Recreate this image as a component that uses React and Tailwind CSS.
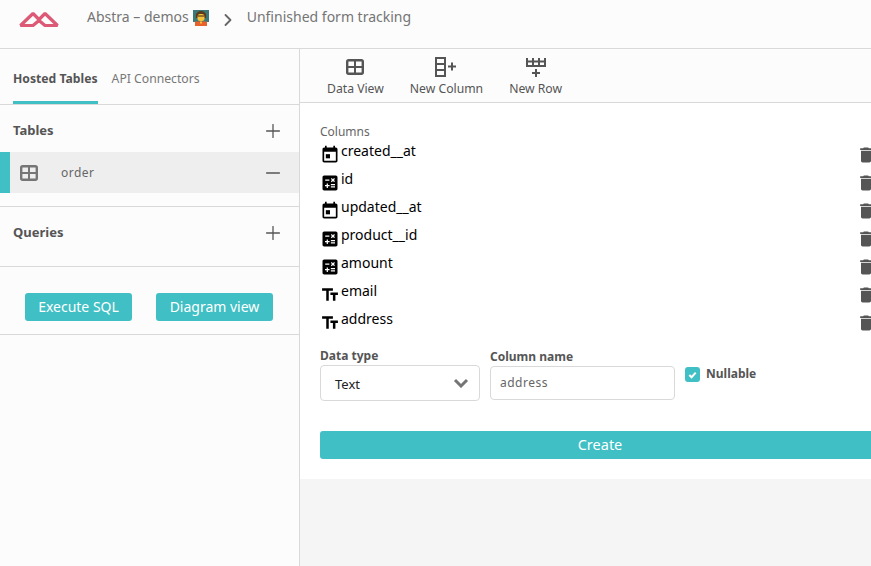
import React from "react";
import { ChevronRight, Plus, Minus } from "lucide-react";

function TableIcon({ className }) {
  return (
    <svg viewBox="0 0 18 16" className={className} fill="none" stroke="currentColor" strokeWidth="2.4">
      <rect x="1.200" y="1.200" width="15.600" height="13.600" rx="1.500" />
      <path d="M1 8h16M9 1v14" strokeWidth="2" />
    </svg>
  );
}

function NewColumnIcon() {
  return (
    <svg viewBox="0 0 22 20" className="h-5 w-[22px] text-[#555555]" fill="none" stroke="currentColor" strokeWidth="2">
      <rect x="1" y="1" width="9" height="18" />
      <path d="M1 7h9M1 13h9" />
      <path d="M13 9.500h8M17 5.500v8" />
    </svg>
  );
}

function NewRowIcon() {
  return (
    <svg viewBox="0 0 22 20" className="h-5 w-[22px] text-[#555555]" fill="none" stroke="currentColor" strokeWidth="2">
      <path d="M2 1v8h18V1M2 4.500h18M8 1v8M14 1v8" />
      <path d="M11 12v8M7 16h8" />
    </svg>
  );
}

function CalendarIcon() {
  return (
    <svg viewBox="0 0 24 24" className="h-5 w-5 shrink-0 text-black" fill="currentColor">
      <path d="M16 1v2H8V1H6v2H5C3.890 3 3 3.900 3 5v14c0 1.100.890 2 2 2h14c1.100 0 2-.900 2-2V5c0-1.100-.900-2-2-2h-1V1h-2zm3 18H5V8h14v11z" />
      <rect x="7" y="11" width="5" height="5" />
    </svg>
  );
}

function CalcIcon() {
  return (
    <svg viewBox="0 0 24 24" className="h-5 w-5 shrink-0 text-black" fill="currentColor">
      <path d="M19 3H5c-1.100 0-2 .900-2 2v14c0 1.100.900 2 2 2h14c1.100 0 2-.900 2-2V5c0-1.100-.900-2-2-2zm-5.970 4.060L14.090 6l1.410 1.410L16.910 6l1.060 1.060-1.410 1.410 1.410 1.410-1.060 1.060-1.410-1.400-1.410 1.410-1.060-1.060 1.410-1.410-1.410-1.420zm-6.780.660h5v1.500h-5v-1.500zM11.500 16h-2v2H8v-2H6v-1.500h2v-2h1.500v2h2V16zm6.500 1.250h-5v-1.500h5v1.500zm0-2.500h-5v-1.500h5v1.500z" />
    </svg>
  );
}

function TextIcon() {
  return (
    <svg viewBox="0 0 24 24" className="h-5 w-5 shrink-0 text-black" fill="currentColor">
      <path d="M2.500 4v3h5v12h3V7h5V4h-13zm19 5h-9v3h3v7h3v-7h3V9z" />
    </svg>
  );
}

function TrashIcon() {
  return (
    <svg viewBox="0 0 24 24" className="h-5 w-5 shrink-0 text-[#555555]" fill="currentColor">
      <path d="M6 19c0 1.100.900 2 2 2h8c1.100 0 2-.900 2-2V7H6v12zM19 4h-3.500l-1-1h-5l-1 1H5v2h14V4z" />
    </svg>
  );
}

function Logo() {
  return (
    <svg viewBox="0 0 42 16" className="h-4 w-[42px]" fill="none" stroke="#dc5a76" strokeWidth="3.200" strokeLinejoin="bevel">
      <path d="M2.500 14.500 L15 2.500 L21 8.500 L27 2.500 L39.500 14.500 L27 14.500 L21 9.500 L15 14.500 Z" />
    </svg>
  );
}

function TeacherEmoji() {
  return (
    <svg viewBox="0 0 16 16" className="h-4 w-4">
      <rect x="0" y="0" width="16" height="12" fill="#3b7a78" />
      <path d="M3 8c-1-5 2-7 5-7s6 2 5 7z" fill="#5b3a1e" />
      <rect x="4.500" y="4" width="7" height="7" rx="2.500" fill="#f4c23d" />
      <path d="M4.500 6h7" stroke="#3a2a1a" strokeWidth="1" />
      <rect x="2" y="11.500" width="12" height="4.500" fill="#e8622c" />
      <rect x="7" y="11.500" width="2" height="2" fill="#f4c23d" />
    </svg>
  );
}

const columns = [
  { name: "created__at", icon: <CalendarIcon /> },
  { name: "id", icon: <CalcIcon /> },
  { name: "updated__at", icon: <CalendarIcon /> },
  { name: "product__id", icon: <CalcIcon /> },
  { name: "amount", icon: <CalcIcon /> },
  { name: "email", icon: <TextIcon /> },
  { name: "address", icon: <TextIcon /> },
];

export default function App() {
  return (
    <div
      className="flex h-[566px] w-[871px] flex-col overflow-hidden bg-[#fcfcfc] text-[#555555]"
      style={{ fontFamily: '"Noto Sans", sans-serif' }}
    >
      {/* HEADER */}
      <header className="flex h-[49px] shrink-0 items-start border-b border-[#d9d9d9] pl-[18px] pt-[6px]">
        <div className="mt-[5px]">
          <Logo />
        </div>
        <span className="ml-[27px] text-[14px] leading-[22px] text-[#757575]">Abstra – demos</span>
        <span className="ml-[4px] mt-[4px]">
          <TeacherEmoji />
        </span>
        <ChevronRight className="ml-[9px] mt-[4px] h-[20px] w-[20px] text-[#666666]" strokeWidth={2.2} />
        <span className="ml-[9px] text-[14px] leading-[22px] text-[#757575]">Unfinished form tracking</span>
      </header>

      <div className="flex flex-1">
        {/* SIDEBAR */}
        <aside className="flex w-[300px] shrink-0 flex-col border-r border-[#d9d9d9]">
          <div className="flex h-[56px] items-stretch gap-[14px] border-b border-[#d9d9d9] pl-[13px]">
            <div className="flex items-center border-b-[3px] border-[#40bfc4] pt-[9px] text-[12.200px] font-bold text-[#555555]">
              Hosted Tables
            </div>
            <div className="flex items-center pt-[6px] text-[12.200px] text-[#777777]">API Connectors</div>
          </div>

          <div className="flex h-[47px] items-center justify-between pl-[13px] pr-[15px] pt-[4px]">
            <span className="text-[13px] font-bold">Tables</span>
            <Plus className="h-[22px] w-[22px] text-[#555555]" strokeWidth={1.400} />
          </div>
          <div className="flex h-[41px] items-center justify-between border-l-[10px] border-[#40bfc4] bg-[#eeeeee] pr-[15px]">
            <div className="flex items-center">
              <TableIcon className="ml-[10px] h-[16px] w-[18px] text-[#757575]" />
              <span className="ml-[23px] text-[12px] tracking-[0.5px] text-[#666666]">order</span>
            </div>
            <Minus className="h-[22px] w-[22px] text-[#555555]" strokeWidth={1.400} />
          </div>
          <div className="h-[14px] border-b border-[#d9d9d9]" />

          <div className="flex h-[60px] items-center justify-between border-b border-[#d9d9d9] pl-[13px] pr-[15px] pb-[7px]">
            <span className="text-[13px] font-bold">Queries</span>
            <Plus className="h-[22px] w-[22px] text-[#555555]" strokeWidth={1.400} />
          </div>

          <div className="flex h-[68px] items-center gap-[24px] border-b border-[#d9d9d9] pl-[25px] pt-[12px]">
            <button className="h-[28px] w-[107px] rounded-[3px] bg-[#40bfc4] text-[14px] text-white">Execute SQL</button>
            <button className="h-[28px] w-[117px] rounded-[3px] bg-[#40bfc4] text-[14px] text-white">Diagram view</button>
          </div>
        </aside>

        {/* MAIN */}
        <main className="flex w-[600px] shrink-0 flex-col bg-[#f5f5f5]">
          <div className="flex h-[54px] shrink-0 items-start gap-[26px] border-b border-[#d9d9d9] bg-[#fcfcfc] pl-[27px] pt-[8px]">
            <div className="flex flex-col items-center">
              <TableIcon className="my-[2px] h-[16px] w-[18px] text-[#555555]" />
              <span className="mt-[2px] text-[12.200px] leading-[20px]">Data View</span>
            </div>
            <div className="flex flex-col items-center">
              <NewColumnIcon />
              <span className="mt-[2px] text-[12.200px] leading-[20px]">New Column</span>
            </div>
            <div className="flex flex-col items-center">
              <NewRowIcon />
              <span className="mt-[2px] text-[12.200px] leading-[20px]">New Row</span>
            </div>
          </div>

          <section className="h-[376px] shrink-0 bg-white px-[20px] pt-[20px]">
            <div className="text-[12px] leading-[17px] text-[#666666]">Columns</div>
            <div className="flex flex-col">
              {columns.map((col) => (
                <div key={col.name} className="flex h-[28px] items-start justify-between">
                  <div className="flex items-start">
                    <span className="mt-[5px]">{col.icon}</span>
                    <span className="ml-[1px] pt-[1px] text-[14px] leading-[20px] text-black">{col.name}</span>
                  </div>
                  <span className="mr-[4px] mt-[5px]">
                    <TrashIcon />
                  </span>
                </div>
              ))}
            </div>

            <div className="mt-[12px] flex items-start">
              <div className="w-[160px]">
                <div className="text-[12px] font-bold leading-[16px]">Data type</div>
                <div className="mt-[1px] flex h-[36px] items-center justify-between rounded-[4px] border border-[#d9d9d9] bg-white pl-[14px] pr-[10px]">
                  <span className="pt-[4px] text-[13px] text-[#222222]">Text</span>
                  <svg viewBox="0 0 16 10" className="h-[10px] w-[16px]" fill="none" stroke="#757575" strokeWidth="3">
                    <path d="M2 2l6 6 6-6" />
                  </svg>
                </div>
              </div>
              <div className="ml-[10px] w-[185px]">
                <div className="mt-[1px] text-[12px] font-bold leading-[16px]">Column name</div>
                <div className="mt-[1px] flex h-[34px] items-center rounded-[4px] border border-[#d9d9d9] bg-white pl-[9px] text-[12px] tracking-[0.5px] text-[#666666]">
                  address
                </div>
              </div>
              <div className="ml-[10px] mt-[17px] flex items-center gap-[6px]">
                <span className="flex h-[15px] w-[15px] items-center justify-center rounded-[3px] bg-[#40bfc4]">
                  <svg viewBox="0 0 12 12" className="h-[11px] w-[11px]" fill="none" stroke="white" strokeWidth="2.200">
                    <path d="M2.500 6.500l2.500 2.500 4.500-5" />
                  </svg>
                </span>
                <span className="text-[12px] font-bold">Nullable</span>
              </div>
            </div>

            <button className="mt-[30px] h-[28px] w-full rounded-[3px] bg-[#40bfc4] text-[14.500px] text-white">Create</button>
          </section>
        </main>
      </div>
    </div>
  );
}
